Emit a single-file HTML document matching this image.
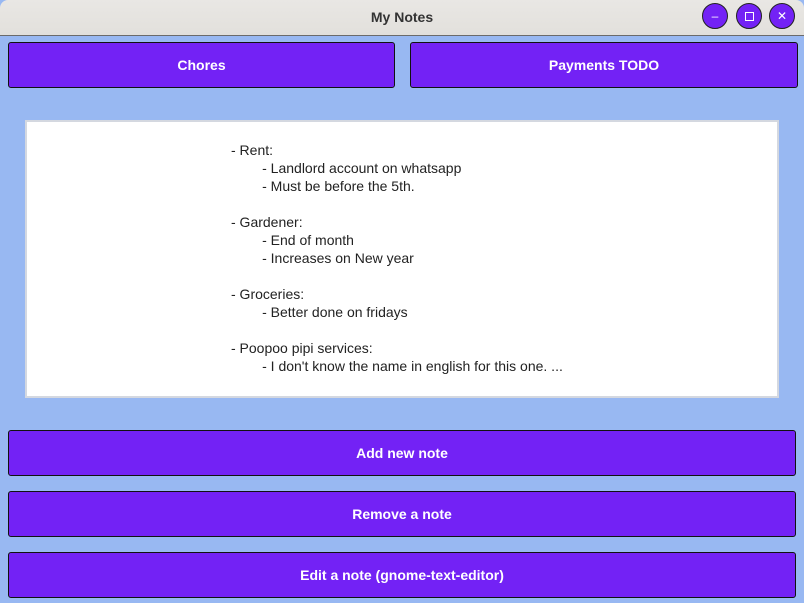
<!DOCTYPE html>
<html><head><style>
body{margin:0;width:804px;height:603px;overflow:hidden;background:#98b8f2;font-family:"Liberation Sans",sans-serif;position:relative}
.title{position:absolute;left:0;top:0;width:804px;height:35px;background:linear-gradient(#e9e7e4,#e2e0dc);border-bottom:1px solid #6b6b6b;border-radius:8px 8px 0 0}
.title span{position:absolute;left:0;right:0;top:9px;text-align:center;font-size:14px;font-weight:bold;color:#333}
.wb{position:absolute;top:3px;width:26px;height:26px;border-radius:50%;background:#7322f5;border:1px solid #222;box-sizing:border-box;color:#fff;font-size:12px;text-align:center;line-height:24px}
.btn{position:absolute;background:#7322f5;border:1px solid #111;border-radius:3px;box-sizing:border-box;color:#fff;font-weight:bold;font-size:14px;display:flex;align-items:center;justify-content:center}
.ta{position:absolute;left:25px;top:120px;width:754px;height:278px;background:#fff;border:2px solid #d4d8e0;box-sizing:border-box}
.txt{position:absolute;left:204px;top:19px;font-size:14px;line-height:18px;color:#222;white-space:pre}
</style></head><body>
<div class="title"><span>My Notes</span>
<div class="wb" style="left:702px">–</div>
<div class="wb" style="left:736px"><div style="width:7px;height:7px;border:1px solid #fff;margin:8px auto 0"></div></div>
<div class="wb" style="left:769px">✕</div>
</div>
<div class="btn" style="left:8px;top:42px;width:387px;height:46px">Chores</div>
<div class="btn" style="left:410px;top:42px;width:388px;height:46px">Payments TODO</div>
<div class="ta"><div class="txt">- Rent:
        - Landlord account on whatsapp
        - Must be before the 5th.

- Gardener:
        - End of month
        - Increases on New year

- Groceries:
        - Better done on fridays

- Poopoo pipi services:
        - I don't know the name in english for this one. ...</div></div>
<div class="btn" style="left:8px;top:430px;width:788px;height:46px">Add new note</div>
<div class="btn" style="left:8px;top:491px;width:788px;height:46px">Remove a note</div>
<div class="btn" style="left:8px;top:552px;width:788px;height:46px">Edit a note (gnome-text-editor)</div>
</body></html>
